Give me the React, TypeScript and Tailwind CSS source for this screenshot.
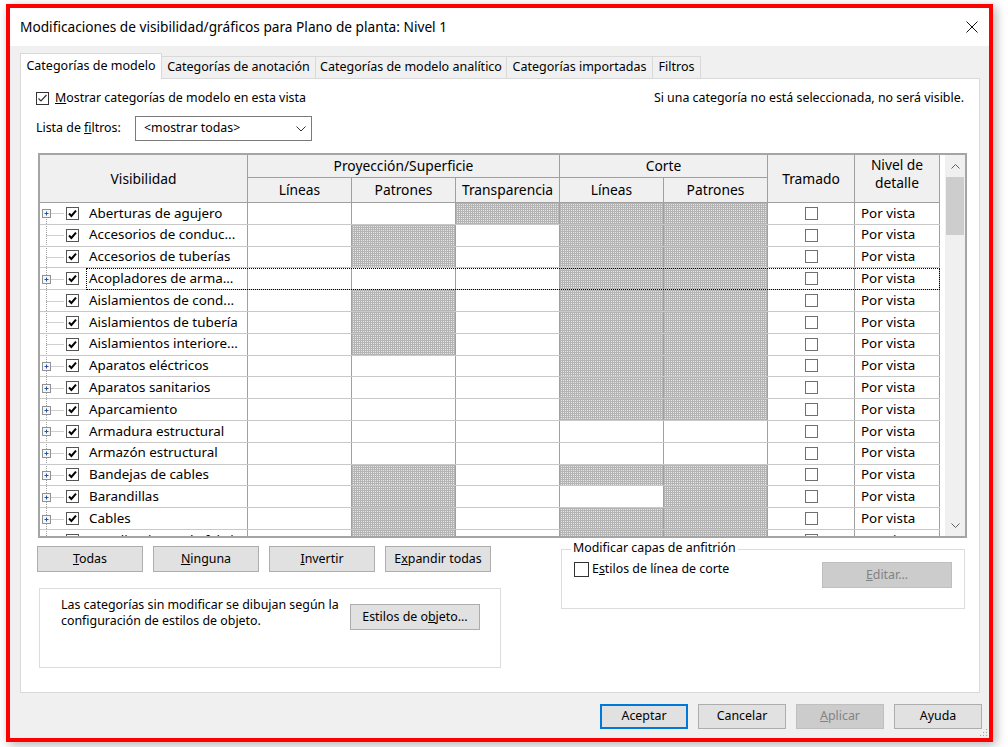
import React from "react";

type Row = { n: string; e: boolean; h: number[]; focus?: boolean; first?: boolean };

const rows: Row[] = [
  { n: "Aberturas de agujero", e: true, h: [0, 0, 1, 1, 1], first: true },
  { n: "Accesorios de conduc...", e: false, h: [0, 1, 0, 1, 1] },
  { n: "Accesorios de tuberías", e: false, h: [0, 1, 0, 1, 1] },
  { n: "Acopladores de arma...", e: true, h: [0, 0, 0, 1, 1], focus: true },
  { n: "Aislamientos de cond...", e: false, h: [0, 1, 0, 1, 1] },
  { n: "Aislamientos de tubería", e: false, h: [0, 1, 0, 1, 1] },
  { n: "Aislamientos interiore...", e: false, h: [0, 1, 0, 1, 1] },
  { n: "Aparatos eléctricos", e: true, h: [0, 0, 0, 1, 1] },
  { n: "Aparatos sanitarios", e: true, h: [0, 0, 0, 1, 1] },
  { n: "Aparcamiento", e: true, h: [0, 0, 0, 1, 1] },
  { n: "Armadura estructural", e: true, h: [0, 0, 0, 0, 0] },
  { n: "Armazón estructural", e: true, h: [0, 0, 0, 0, 0] },
  { n: "Bandejas de cables", e: true, h: [0, 1, 0, 1, 1] },
  { n: "Barandillas", e: true, h: [0, 1, 0, 0, 1] },
  { n: "Cables", e: true, h: [0, 1, 0, 1, 1] },
  { n: "Canalizaciones de fabri...", e: false, h: [0, 1, 0, 1, 1] },
];

const HATCH =
  "bg-[#e6e6e6] bg-[image:linear-gradient(90deg,#b4b4b4_1px,transparent_1px),linear-gradient(#b4b4b4_1px,transparent_1px)] bg-[length:2px_2px]";

function TreeGutter({ e, first }: { e: boolean; first?: boolean }) {
  return (
    <svg width="24" height="22" viewBox="0 0 24 22" className="shrink-0">
      <line x1="6.5" y1={first ? 11 : 0} x2="6.5" y2="22" stroke="#a0a0a0" strokeWidth="1" strokeDasharray="1 1" />
      <line x1="6.5" y1="11.5" x2="24" y2="11.5" stroke="#a0a0a0" strokeWidth="1" strokeDasharray="1 1" />
      {e && (
        <g>
          <rect x="2.5" y="7.5" width="8" height="8" fill="#f4f6fa" stroke="#919191" />
          <path d="M4.5 11.5H8.5M6.5 9.5V13.5" stroke="#2a55a0" strokeWidth="1" />
        </g>
      )}
    </svg>
  );
}

function TableCheck() {
  return (
    <svg width="13" height="13" viewBox="0 0 13 13" className="shrink-0">
      <rect x="0.5" y="0.5" width="12" height="12" fill="#fff" stroke="#555" />
      <path d="M3 6.5L5.4 9L10 3.6" stroke="#000" strokeWidth="2" fill="none" />
    </svg>
  );
}

function EmptyBox({ size = 13, color = "#707070" }: { size?: number; color?: string }) {
  return (
    <svg width={size} height={size} viewBox={`0 0 ${size} ${size}`} className="shrink-0">
      <rect x="0.5" y="0.5" width={size - 1} height={size - 1} fill="#fff" stroke={color} />
    </svg>
  );
}

function Btn({ children, w = "w-[106px]" }: { children: React.ReactNode; w?: string }) {
  return (
    <div className={`${w} h-[26px] bg-[#e1e1e1] border border-[#adadad] flex items-center justify-center`}>
      {children}
    </div>
  );
}

export default function App() {
  return (
    <div className="w-[1008px] h-[747px] bg-white overflow-hidden pl-[6px] pt-[4px] font-['Noto_Sans',sans-serif] text-[12.4px] leading-none text-black">
      <div className="relative w-[987px] h-[738px] border-4 border-[#ff0000] bg-[#f0f0f0] flex flex-col shadow-[3px_3px_10px_rgba(0,0,0,0.3)]">
        {/* Title bar */}
        <div className="h-[38px] shrink-0 bg-white flex items-center justify-between pl-[10px] pr-[11px]">
          <span className="text-[13.7px]">Modificaciones de visibilidad/gráficos para Plano de planta: Nivel 1</span>
          <svg width="12" height="12" viewBox="0 0 12 12">
            <path d="M0.5 0.5L11.5 11.5M11.5 0.5L0.5 11.5" stroke="#111" strokeWidth="1" />
          </svg>
        </div>

        <div className="flex-1 flex flex-col pl-[10px] pr-[7px] pt-[8px]">
          {/* Tabs */}
          <div className="flex items-end h-[25px] -mb-px relative z-10 text-[12.5px]">
            <div className="w-[142px] h-[26px] bg-white border-t border-l border-r border-[#d9d9d9] flex items-center justify-center">
              Categorías de modelo
            </div>
            <div className="w-[154px] h-[23px] bg-[#f0f0f0] border-t border-r border-b border-[#d9d9d9] flex items-center justify-center">
              Categorías de anotación
            </div>
            <div className="w-[191px] h-[23px] bg-[#f0f0f0] border-t border-r border-b border-[#d9d9d9] flex items-center justify-center">
              Categorías de modelo analítico
            </div>
            <div className="w-[146px] h-[23px] bg-[#f0f0f0] border-t border-r border-b border-[#d9d9d9] flex items-center justify-center">
              Categorías importadas
            </div>
            <div className="w-[48px] h-[23px] bg-[#f0f0f0] border-t border-r border-b border-[#d9d9d9] flex items-center justify-center">
              Filtros
            </div>
          </div>

          {/* Panel */}
          <div className="w-[960px] h-[615px] shrink-0 bg-white border border-[#d9d9d9] pl-[15px] pt-[10px] flex flex-col">
            <div className="h-[18px] flex items-center justify-between pr-[15px]">
              <div className="flex items-center gap-[6px]">
                <svg width="13" height="13" viewBox="0 0 13 13">
                  <rect x="0.5" y="0.5" width="12" height="12" fill="#fff" stroke="#333" />
                  <path d="M2.5 6.5L5 9L10.5 3" stroke="#333" strokeWidth="1.2" fill="none" />
                </svg>
                <span>
                  <span className="underline">M</span>ostrar categorías de modelo en esta vista
                </span>
              </div>
              <span>Si una categoría no está seleccionada, no será visible.</span>
            </div>

            <div className="mt-[9px] h-[25px] flex items-center">
              <span className="w-[99px]">
                Lista de <span className="underline">f</span>iltros:
              </span>
              <div className="w-[177px] h-[25px] border border-[#7a7a7a] flex items-center justify-between pl-[8px] pr-[5px]">
                <span>&lt;mostrar todas&gt;</span>
                <svg width="10" height="6" viewBox="0 0 10 6">
                  <path d="M0.5 0.5L5 5L9.5 0.5" stroke="#333" fill="none" />
                </svg>
              </div>
            </div>

            {/* Table */}
            <div className="mt-[12px] ml-[2px] w-[929px] h-[385px] shrink-0 border-2 border-[#a5a5a5] flex text-[13.4px]">
              <div className="w-[905px] flex flex-col">
                <div className="flex h-[48px] shrink-0 text-[13.8px]">
                  <div className="grid grid-cols-[208px_104px_104px_104px_104px_104px_87px_85px] grid-rows-[23px_25px] w-[900px] h-[48px] bg-[#f0f0f0]">
                    <div className="row-span-2 border-r border-b border-[#a0a0a0] flex items-center justify-center">Visibilidad</div>
                    <div className="col-span-3 border-r border-b border-[#a0a0a0] flex items-center justify-center">Proyección/Superficie</div>
                    <div className="col-span-2 border-r border-b border-[#a0a0a0] flex items-center justify-center">Corte</div>
                    <div className="row-span-2 border-r border-b border-[#a0a0a0] flex items-center justify-center">Tramado</div>
                    <div className="row-span-2 border-r border-b border-[#a0a0a0] flex flex-col items-center justify-center leading-[18px] pb-[9px]">
                      <span>Nivel de</span>
                      <span>detalle</span>
                    </div>
                    <div className="border-r border-b border-[#a0a0a0] flex items-center justify-center">Líneas</div>
                    <div className="border-r border-b border-[#a0a0a0] flex items-center justify-center">Patrones</div>
                    <div className="border-r border-b border-[#a0a0a0] flex items-center justify-center">Transparencia</div>
                    <div className="border-r border-b border-[#a0a0a0] flex items-center justify-center">Líneas</div>
                    <div className="border-r border-b border-[#a0a0a0] flex items-center justify-center">Patrones</div>
                  </div>
                  <div className="w-[5px] bg-white" />
                </div>
                <div className="flex-1 overflow-hidden">
                  {rows.map((r, i) => (
                    <div key={i} className="relative w-[900px] h-[21.8px] flex border-b border-[#c8c8c8]">
                      <div className="w-[208px] h-full border-r border-[#a0a0a0] flex items-center overflow-hidden">
                        <TreeGutter e={r.e} first={r.first} />
                        <span className="ml-[2px]">
                          <TableCheck />
                        </span>
                        <span className="ml-[10px] whitespace-nowrap">{r.n}</span>
                      </div>
                      {r.h.map((hv, j) => (
                        <div key={j} className={`w-[104px] h-full border-r border-[#a0a0a0] ${hv ? HATCH : "bg-white"}`} />
                      ))}
                      <div className="w-[87px] h-full border-r border-[#a0a0a0] flex items-center justify-center">
                        <EmptyBox />
                      </div>
                      <div className="w-[85px] h-full border-r border-[#a0a0a0] flex items-center pl-[6px] whitespace-nowrap">
                        Por vista
                      </div>
                      {r.focus && (
                        <div className="absolute left-[46px] right-0 top-0 -bottom-px border border-dotted border-black pointer-events-none" />
                      )}
                    </div>
                  ))}
                </div>
              </div>
              {/* Scrollbar */}
              <div className="w-[20px] bg-[#f0f0f0] flex flex-col">
                <div className="h-[22px] flex items-center justify-center">
                  <svg width="9" height="5" viewBox="0 0 9 5">
                    <path d="M0.5 4.5L4.5 0.5L8.5 4.5" stroke="#606060" fill="none" />
                  </svg>
                </div>
                <div className="h-[58px] mx-[1px] bg-[#cdcdcd]" />
                <div className="flex-1" />
                <div className="h-[22px] flex items-center justify-center">
                  <svg width="9" height="5" viewBox="0 0 9 5">
                    <path d="M0.5 0.5L4.5 4.5L8.5 0.5" stroke="#606060" fill="none" />
                  </svg>
                </div>
              </div>
            </div>

            {/* Lower section */}
            <div className="mt-[8px] flex">
              <div className="w-[466px] flex flex-col">
                <div className="flex gap-[10px] ml-[1px]">
                  <Btn>
                    <span><span className="underline">T</span>odas</span>
                  </Btn>
                  <Btn>
                    <span><span className="underline">N</span>inguna</span>
                  </Btn>
                  <Btn>
                    <span><span className="underline">I</span>nvertir</span>
                  </Btn>
                  <Btn>
                    <span>E<span className="underline">x</span>pandir todas</span>
                  </Btn>
                </div>
                <div className="mt-[16px] ml-[3px] w-[462px] h-[80px] border border-[#dcdcdc] flex items-start pl-[21px] pt-[8px]">
                  <div className="w-[289px] leading-[16px]">
                    <div>Las categorías sin modificar se dibujan según la</div>
                    <div>configuración de estilos de objeto.</div>
                  </div>
                  <div className="mt-[7px]">
                    <Btn w="w-[130px]">
                      <span>Estilos de o<span className="underline">b</span>jeto...</span>
                    </Btn>
                  </div>
                </div>
              </div>
              <div className="ml-[59px] mt-[3px] w-[404px] h-[60px] border border-[#dcdcdc] relative flex items-start pl-[12px] pt-[12px] pr-[12px]">
                <span className="absolute -top-[8px] left-[9px] bg-white px-[2px]">Modificar capas de anfitrión</span>
                <div className="flex items-center gap-[3px] h-[15px]">
                  <EmptyBox size={15} color="#333" />
                  <span>
                    E<span className="underline">s</span>tilos de línea de corte
                  </span>
                </div>
                <div className="ml-auto w-[130px] h-[26px] bg-[#cccccc] border border-[#bfbfbf] flex items-center justify-center text-[#838383]">
                  <span><span className="underline">E</span>ditar...</span>
                </div>
              </div>
            </div>
          </div>

          {/* Footer */}
          <div className="mt-[11px] flex justify-end gap-[10px]">
            <div className="w-[88px] h-[25px] bg-[#e1e1e1] border-2 border-[#0078d7] flex items-center justify-center">Aceptar</div>
            <div className="w-[88px] h-[25px] bg-[#e1e1e1] border border-[#adadad] flex items-center justify-center">Cancelar</div>
            <div className="w-[88px] h-[25px] bg-[#cccccc] border border-[#bfbfbf] flex items-center justify-center text-[#838383]">
              <span><span className="underline">A</span>plicar</span>
            </div>
            <div className="w-[88px] h-[25px] bg-[#e1e1e1] border border-[#adadad] flex items-center justify-center">Ayuda</div>
          </div>
        </div>

        <svg width="8" height="8" viewBox="0 0 8 8" className="absolute right-[1px] bottom-[1px]">
          <rect x="6" y="0" width="1" height="1" fill="#a0a0a0" />
          <rect x="3" y="3" width="1" height="1" fill="#a0a0a0" />
          <rect x="6" y="3" width="1" height="1" fill="#a0a0a0" />
          <rect x="0" y="6" width="1" height="1" fill="#a0a0a0" />
          <rect x="3" y="6" width="1" height="1" fill="#a0a0a0" />
          <rect x="6" y="6" width="1" height="1" fill="#a0a0a0" />
        </svg>
      </div>
    </div>
  );
}
